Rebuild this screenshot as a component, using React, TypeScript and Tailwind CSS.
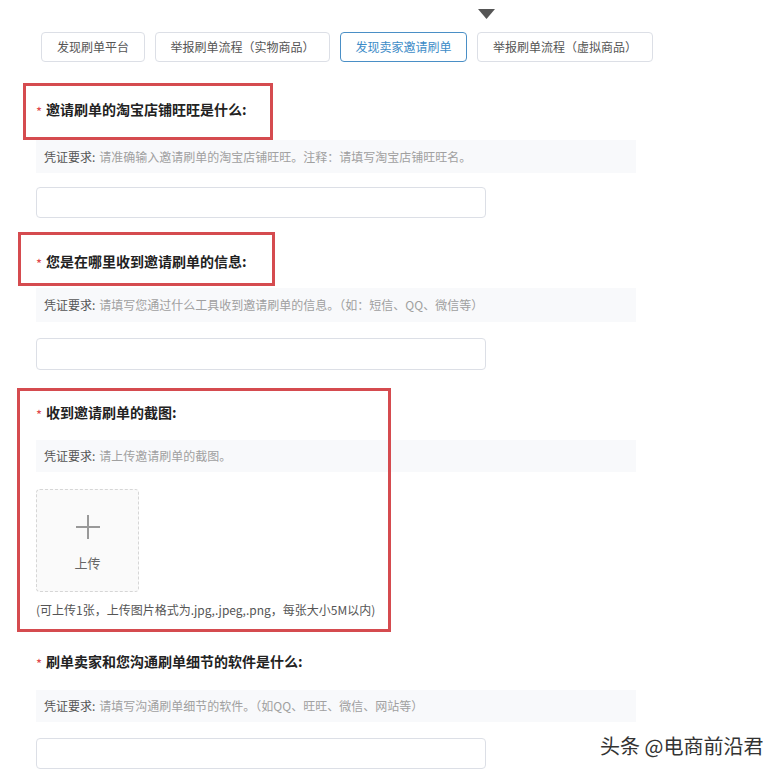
import React from 'react';

const tabs = [
  { label: '发现刷单平台', w: 'w-[104px]', active: false },
  { label: '举报刷单流程（实物商品）', w: 'w-[175px]', active: false },
  { label: '发现卖家邀请刷单', w: 'w-[127px]', active: true },
  { label: '举报刷单流程（虚拟商品）', w: 'w-[176px]', active: false },
];

function Label({ text, className }: { text: string; className: string }) {
  return (
    <div className={`flex items-center h-[20px] ${className}`}>
      <span className="w-[10px] text-[13px] text-[#e0474c] leading-none pt-[5px]">*</span>
      <span className="text-[14px] font-bold text-[#222]">{text}</span>
    </div>
  );
}

function Hint({ text, className }: { text: string; className: string }) {
  return (
    <div className={`w-[600px] bg-[#f8f9fb] flex items-center pl-2 text-[12px] ${className}`}>
      <span className="text-[#555]">凭证要求:</span>
      <span className="ml-1 text-[#a0a0a0]">{text}</span>
    </div>
  );
}

function TextInput({ className }: { className: string }) {
  return <div className={`w-[450px] border border-[#dcdfe6] rounded-[4px] bg-white ${className}`} />;
}

export default function App() {
  return (
    <div className="relative w-[780px] h-[775px] bg-white overflow-hidden font-['Noto_Sans_CJK_SC','Noto_Sans',sans-serif]">
      {/* pointer above the tabs */}
      <div className="pt-[9px] pl-[478px]">
        <svg width="17" height="10" viewBox="0 0 17 10">
          <polygon points="0,0 17,0 8.5,10" fill="#555" />
        </svg>
      </div>

      <div className="mt-[13px] pl-[41px] flex gap-[10px]">
        {tabs.map((t) => (
          <div
            key={t.label}
            className={`${t.w} h-[30px] flex items-center justify-center rounded-[4px] border text-[12px] ${
              t.active ? 'border-[#4a8fc6] text-[#3c8bc7]' : 'border-[#dcdfe6] text-[#555]'
            }`}
          >
            {t.label}
          </div>
        ))}
      </div>

      <div className="pl-[36px]">
        <Label text="邀请刷单的淘宝店铺旺旺是什么:" className="mt-[37px]" />
        <Hint text="请准确输入邀请刷单的淘宝店铺旺旺。注释：请填写淘宝店铺旺旺名。" className="mt-[21px] h-[33px]" />
        <TextInput className="mt-[14px] h-[31px]" />

        <Label text="您是在哪里收到邀请刷单的信息:" className="mt-[33px]" />
        <Hint text="请填写您通过什么工具收到邀请刷单的信息。（如：短信、QQ、微信等）" className="mt-[17px] h-[34px]" />
        <TextInput className="mt-[16px] h-[32px]" />

        <Label text="收到邀请刷单的截图:" className="mt-[32px]" />
        <Hint text="请上传邀请刷单的截图。" className="mt-[18px] h-[32px]" />
        <div className="mt-[17px] w-[103px] h-[103px] border border-dashed border-[#d6d6d6] rounded-[4px] bg-[#fafafa] flex flex-col items-center">
          <svg className="mt-[24px]" width="26" height="26" viewBox="0 0 26 26">
            <path d="M13 1v24M1 13h24" stroke="#999" strokeWidth="2" fill="none" />
          </svg>
          <span className="mt-[16px] text-[13px] text-[#666] leading-none">上传</span>
        </div>
        <div className="mt-[9px] h-[18px] flex items-center text-[12px] text-[#555]">
          (可上传1张，上传图片格式为.jpg,.jpeg,.png，每张大小5M以内)
        </div>

        <Label text="刷单卖家和您沟通刷单细节的软件是什么:" className="mt-[32px]" />
        <Hint text="请填写沟通刷单细节的软件。（如QQ、旺旺、微信、网站等）" className="mt-[19px] h-[32px]" />
        <TextInput className="mt-[16px] h-[31px]" />
      </div>

      {/* red annotation frames */}
      <div className="absolute left-[23px] top-[83px] w-[250px] h-[57px] border-[3px] border-[#d54b4f]" />
      <div className="absolute left-[18px] top-[232px] w-[257px] h-[54px] border-[3px] border-[#d54b4f]" />
      <div className="absolute left-[17px] top-[388px] w-[374px] h-[244px] border-[3px] border-[#d54b4f]" />

      {/* watermark */}
      <div className="absolute left-[600px] top-[733px] text-[20px] text-[#333] leading-[26px] [text-shadow:0_0_2px_#fff]">
        头条 @电商前沿君
      </div>
    </div>
  );
}
